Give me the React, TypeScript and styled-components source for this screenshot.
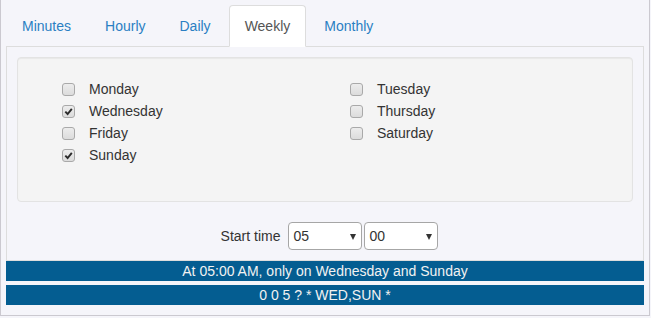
import React, { useState } from 'react';
import styled, { createGlobalStyle } from 'styled-components';

const GlobalStyle = createGlobalStyle`
  body {
    margin: 0;
    background: #f5f5fa;
    font-family: "Liberation Sans", Arial, sans-serif;
    font-size: 14px;
    color: #333;
  }
`;

const Frame = styled.div`
  width: 650px;
  height: 316px;
  box-sizing: border-box;
  padding: 5px 5px 0;
  background: #f5f5fa;
  border: 1px solid #cbc9d0;
  border-top: none;
`;

const Tabs = styled.ul`
  display: flex;
  margin: 0;
  padding: 0;
  list-style: none;
  border-bottom: 1px solid #ddd;
`;

const Tab = styled.li<{ $active: boolean }>`
  margin-right: 2px;
  margin-bottom: -1px;
  padding: 10px 15px;
  line-height: 20px;
  border: 1px solid ${p => (p.$active ? '#ddd' : 'transparent')};
  border-bottom-color: ${p => (p.$active ? '#fff' : 'transparent')};
  border-radius: 4px 4px 0 0;
  background: ${p => (p.$active ? '#fff' : 'transparent')};
  color: ${p => (p.$active ? '#555' : '#2a7fc3')};
  cursor: pointer;
`;

const TabBody = styled.div`
  border: 1px solid #ddd;
  border-top: none;
  padding: 10px;
`;

const Well = styled.div`
  display: grid;
  grid-template-columns: 1fr 1fr;
  height: 145px;
  box-sizing: border-box;
  padding: 20px 19px 19px;
  background: #f4f4f4;
  border: 1px solid #e3e3e3;
  border-radius: 4px;
  box-shadow: inset 0 1px 1px rgba(0, 0, 0, 0.05);
  margin-bottom: 20px;
`;

const Column = styled.div`
  display: flex;
  flex-direction: column;
  padding-left: 25px;
`;

const DayRow = styled.label`
  display: flex;
  align-items: center;
  height: 22px;
  cursor: pointer;
`;

const Box = styled.span<{ $checked: boolean }>`
  display: flex;
  align-items: center;
  justify-content: center;
  width: 11px;
  height: 11px;
  margin-right: 14px;
  border: 1px solid #a9a9a9;
  border-radius: 3px;
  background: linear-gradient(#ececec, #dcdcdc);
  svg {
    visibility: ${p => (p.$checked ? 'visible' : 'hidden')};
  }
`;

const TimeRow = styled.div`
  display: flex;
  align-items: center;
  justify-content: center;
  padding-left: 11px;
  height: 28px;
`;

const TimeLabel = styled.span`
  margin-right: 8px;
`;

const SelectWrap = styled.div`
  position: relative;
  margin-right: 2px;
  &::after {
    content: '';
    position: absolute;
    right: 6px;
    top: 12px;
    border-left: 3px solid transparent;
    border-right: 3px solid transparent;
    border-top: 6px solid #333;
    pointer-events: none;
  }
`;

const Select = styled.select`
  appearance: none;
  width: 74px;
  height: 28px;
  padding: 0 4px;
  font-family: inherit;
  font-size: 14px;
  color: #333;
  background: #fff;
  border: 1px solid #a6a6a6;
  border-radius: 4px;
  outline: none;
`;

const Bar = styled.div<{ $gap: number }>`
  margin-top: ${p => p.$gap}px;
  height: 20px;
  line-height: 20px;
  text-align: center;
  background: #045d91;
  color: #f2f2f2;
`;

const tabs = ['Minutes', 'Hourly', 'Daily', 'Weekly', 'Monthly'];
const dayCols = [
  ['Monday', 'Wednesday', 'Friday', 'Sunday'],
  ['Tuesday', 'Thursday', 'Saturday'],
];
const hours = Array.from({ length: 24 }, (_, i) => String(i).padStart(2, '0'));
const minutes = Array.from({ length: 60 }, (_, i) => String(i).padStart(2, '0'));

const Check = () => (
  <svg width="9" height="9" viewBox="0 0 9 9">
    <path d="M1.3 4.6 L3.6 7 L7.8 1.8" fill="none" stroke="#2b2b2b" strokeWidth="1.9" />
  </svg>
);

const App = () => {
  const [active, setActive] = useState('Weekly');
  const [days, setDays] = useState<string[]>(['Wednesday', 'Sunday']);
  const [hour, setHour] = useState('05');
  const [minute, setMinute] = useState('00');

  const toggle = (d: string) =>
    setDays(days.includes(d) ? days.filter(x => x !== d) : [...days, d]);

  const order = ['Monday', 'Tuesday', 'Wednesday', 'Thursday', 'Friday', 'Saturday', 'Sunday'];
  const picked = order.filter(d => days.includes(d));
  const spoken = picked.length > 1
    ? picked.slice(0, -1).join(', ') + ' and ' + picked[picked.length - 1]
    : picked.join('');
  const h = Number(hour);
  const ampm = h < 12 ? 'AM' : 'PM';
  const h12 = String(h % 12 === 0 ? 12 : h % 12).padStart(2, '0');
  const cron = `0 ${Number(minute)} ${h} ? * ${picked.map(d => d.slice(0, 3).toUpperCase()).join(',')} *`;

  return (
    <Frame>
      <GlobalStyle />
      <Tabs>
        {tabs.map(t => (
          <Tab key={t} $active={t === active} onClick={() => setActive(t)}>{t}</Tab>
        ))}
      </Tabs>
      <TabBody>
        <Well>
          {dayCols.map((col, i) => (
            <Column key={i}>
              {col.map(d => (
                <DayRow key={d} onClick={() => toggle(d)}>
                  <Box $checked={days.includes(d)}><Check /></Box>
                  {d}
                </DayRow>
              ))}
            </Column>
          ))}
        </Well>
        <TimeRow>
          <TimeLabel>Start time</TimeLabel>
          <SelectWrap>
            <Select value={hour} onChange={e => setHour(e.target.value)}>
              {hours.map(v => <option key={v}>{v}</option>)}
            </Select>
          </SelectWrap>
          <SelectWrap>
            <Select value={minute} onChange={e => setMinute(e.target.value)}>
              {minutes.map(v => <option key={v}>{v}</option>)}
            </Select>
          </SelectWrap>
        </TimeRow>
      </TabBody>
      <Bar $gap={0}>At {h12}:{minute} {ampm}, only on {spoken}</Bar>
      <Bar $gap={4}>{cron}</Bar>
    </Frame>
  );
};

export default App;
